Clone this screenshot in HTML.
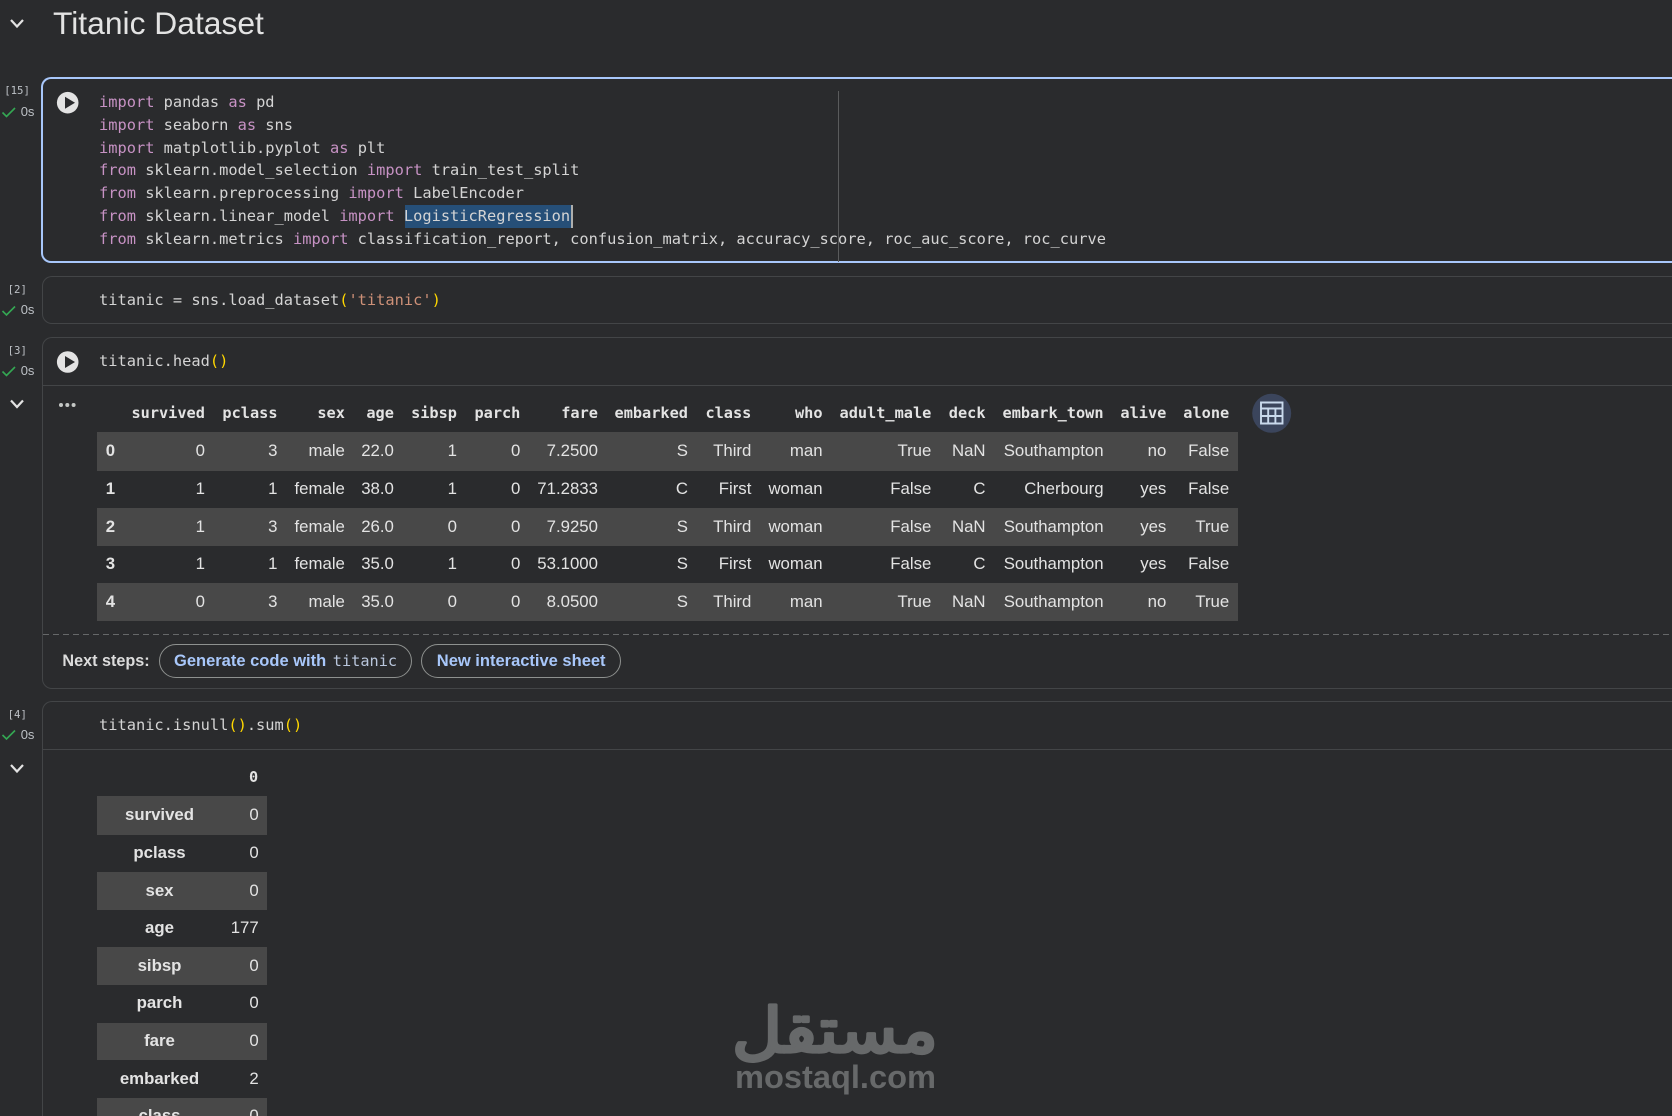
<!DOCTYPE html>
<html lang="en"><head><meta charset="utf-8"><title>Titanic Dataset</title>
<style>
html,body{margin:0;padding:0;background:#2a2b2d;overflow:hidden}
#p{position:relative;width:1672px;height:1116px;overflow:hidden;background:#2a2b2d;color:#e3e3e3;font-family:"Liberation Sans",sans-serif}
#p>*{position:absolute}
.cell{border:1px solid #434547;border-right:0;border-radius:10px 0 0 10px;box-sizing:border-box;left:42px;width:1630px}
.code{left:99px;font:15.35px/23px "DejaVu Sans Mono",monospace;color:#d4d4d4;white-space:pre;height:23px}
.k{color:#c792c4}.s{color:#ce9178}.b{color:#ffd700}
.n{font:10.7px/14px "DejaVu Sans Mono",monospace;color:#bdc1c6;white-space:pre}
.t{font-size:13px;line-height:16px;color:#bdc1c6;left:20.7px}
.hl{background:#434547;height:1px;left:42px;width:1630px}
.r{left:97px;width:1141px;display:flex;font-size:16.8px}
.r span{display:block;flex:none;box-sizing:border-box;text-align:right;padding-right:8.7px;white-space:nowrap}
.r span:nth-child(1){width:26px;text-align:left;padding:0 0 0 8.7px;font-weight:700}
.r span:nth-child(2){width:90.6px}.r span:nth-child(3){width:72.6px}.r span:nth-child(4){width:67.4px}
.r span:nth-child(5){width:49px}.r span:nth-child(6){width:63.1px}.r span:nth-child(7){width:63.4px}
.r span:nth-child(8){width:77.6px}.r span:nth-child(9){width:90px}.r span:nth-child(10){width:63.4px}
.r span:nth-child(11){width:71.2px}.r span:nth-child(12){width:108.8px}.r span:nth-child(13){width:54.2px}
.r span:nth-child(14){width:118px}.r span:nth-child(15){width:62.8px}.r span:nth-child(16){width:62.9px}
.h{font:700 15.25px/38px "DejaVu Sans Mono",monospace;top:394px;height:38px}
.z{background:#484848}
.w{left:97px;width:170px;font-size:16.8px;display:flex;overflow:hidden}
.w b{display:block;width:125px;text-align:center}
.w i{display:block;width:36.7px;text-align:right;font-style:normal}
.chip{border:1px solid #8e918f;border-radius:17px;box-sizing:border-box;height:34px;top:644px;font-weight:700;font-size:16.5px;line-height:33px;color:#a8c7fa;white-space:nowrap}
</style></head><body><div id="p">

<svg style="left:0;top:0" width="80" height="1116" fill="none">
<path d="M11 20L17 26.5L23 20" stroke="#e3e3e3" stroke-width="2.2"/>
<path d="M11 400.5L17 407L23 400.5" stroke="#e3e3e3" stroke-width="2.2"/>
<path d="M11 765L17 771.5L23 765" stroke="#e3e3e3" stroke-width="2.2"/>
<g stroke="#34a853" stroke-width="1.6">
<path d="M2.5 112.5L6.5 116.5L15 108"/>
<path d="M2.5 311L6.5 315L15 306.5"/>
<path d="M2.5 371.5L6.5 375.5L15 367"/>
<path d="M2.5 735L6.5 739L15 730.5"/>
</g>
<g fill="#c4c7c5"><circle cx="61" cy="405" r="2"/><circle cx="67.3" cy="405" r="2"/><circle cx="73.6" cy="405" r="2"/></g>
</svg>

<div style="left:53px;top:3px;font-size:31.8px;line-height:40px;color:#e3e3e3;white-space:nowrap">Titanic Dataset</div>

<div class="n" style="left:4.2px;top:84px">[15]</div><div class="t" style="top:104px">0s</div>
<div class="n" style="left:7.6px;top:283px">[2]</div><div class="t" style="top:302px">0s</div>
<div class="n" style="left:7.6px;top:344px">[3]</div><div class="t" style="top:363px">0s</div>
<div class="n" style="left:7.6px;top:708px">[4]</div><div class="t" style="top:727px">0s</div>

<div class="cell" style="top:77px;height:186px;border:2px solid #a8c7fa;border-right:0;left:41px;width:1631px"></div>
<div class="cell" style="top:276px;height:48px"></div>
<div class="cell" style="top:337px;height:352px"></div>
<div class="cell" style="top:701px;height:415px;border-bottom:0;border-radius:10px 0 0 0"></div>
<div class="hl" style="top:385px"></div>
<div class="hl" style="top:749px"></div>
<div style="left:43px;width:1629px;top:634px;height:1px;background:repeating-linear-gradient(90deg,#666869 0 6px,transparent 6px 10px)"></div>

<div style="left:404.5px;top:205px;width:166px;height:23px;background:#264f78"></div>
<div style="left:571px;top:205px;width:1.5px;height:23px;background:#aeafad"></div>
<div style="left:838px;top:91px;width:1px;height:171px;background:#5a5b5c"></div>

<svg style="left:50px;top:85px" width="36" height="300">
<circle cx="17.7" cy="17.7" r="10.8" fill="#e3e3e3"/><path d="M15 11.7V23.7L25 17.7Z" fill="#2a2b2d"/>
<circle cx="17.7" cy="277" r="10.8" fill="#e3e3e3"/><path d="M15 271V283L25 277Z" fill="#2a2b2d"/>
</svg>

<div class="code" style="top:90.5px"><span class="k">import</span> pandas <span class="k">as</span> pd</div>
<div class="code" style="top:114px"><span class="k">import</span> seaborn <span class="k">as</span> sns</div>
<div class="code" style="top:137px"><span class="k">import</span> matplotlib.pyplot <span class="k">as</span> plt</div>
<div class="code" style="top:158.6px"><span class="k">from</span> sklearn.model_selection <span class="k">import</span> train_test_split</div>
<div class="code" style="top:181.5px"><span class="k">from</span> sklearn.preprocessing <span class="k">import</span> LabelEncoder</div>
<div class="code" style="top:205px"><span class="k">from</span> sklearn.linear_model <span class="k">import</span> LogisticRegression</div>
<div class="code" style="top:228px"><span class="k">from</span> sklearn.metrics <span class="k">import</span> classification_report, confusion_matrix, accuracy_score, roc_auc_score, roc_curve</div>
<div class="code" style="top:288.5px">titanic = sns.load_dataset<span class="b">(</span><span class="s">'titanic'</span><span class="b">)</span></div>
<div class="code" style="top:349.5px">titanic.head<span class="b">()</span></div>
<div class="code" style="top:714px">titanic.isnull<span class="b">()</span>.sum<span class="b">()</span></div>

<div class="r h"><span></span><span>survived</span><span>pclass</span><span>sex</span><span>age</span><span>sibsp</span><span>parch</span><span>fare</span><span>embarked</span><span>class</span><span>who</span><span>adult_male</span><span>deck</span><span>embark_town</span><span>alive</span><span>alone</span></div>
<div class="r z" style="top:432px;height:38.7px;line-height:38.7px"><span>0</span><span>0</span><span>3</span><span>male</span><span>22.0</span><span>1</span><span>0</span><span>7.2500</span><span>S</span><span>Third</span><span>man</span><span>True</span><span>NaN</span><span>Southampton</span><span>no</span><span>False</span></div>
<div class="r" style="top:470.7px;height:37.3px;line-height:35.3px"><span>1</span><span>1</span><span>1</span><span>female</span><span>38.0</span><span>1</span><span>0</span><span>71.2833</span><span>C</span><span>First</span><span>woman</span><span>False</span><span>C</span><span>Cherbourg</span><span>yes</span><span>False</span></div>
<div class="r z" style="top:508px;height:37.7px;line-height:38.7px"><span>2</span><span>1</span><span>3</span><span>female</span><span>26.0</span><span>0</span><span>0</span><span>7.9250</span><span>S</span><span>Third</span><span>woman</span><span>False</span><span>NaN</span><span>Southampton</span><span>yes</span><span>True</span></div>
<div class="r" style="top:545.7px;height:37.3px;line-height:35.3px"><span>3</span><span>1</span><span>1</span><span>female</span><span>35.0</span><span>1</span><span>0</span><span>53.1000</span><span>S</span><span>First</span><span>woman</span><span>False</span><span>C</span><span>Southampton</span><span>yes</span><span>False</span></div>
<div class="r z" style="top:583px;height:37.7px;line-height:38.7px"><span>4</span><span>0</span><span>3</span><span>male</span><span>35.0</span><span>0</span><span>0</span><span>8.0500</span><span>S</span><span>Third</span><span>man</span><span>True</span><span>NaN</span><span>Southampton</span><span>no</span><span>True</span></div>

<svg style="left:1249px;top:392px" width="44" height="44" fill="none">
<circle cx="22.7" cy="21.3" r="19.5" fill="#3b455c"/>
<path d="M12 10.5H33.5V31.5H12ZM12 16.5H33.5M12 24H33.5M19.2 16.5V31.5M26.4 16.5V31.5" stroke="#c9d9ec" stroke-width="1.9"/>
</svg>

<div style="left:62.4px;top:650.5px;font-size:16.2px;font-weight:700;line-height:20px;color:#dcdcdc;white-space:nowrap">Next steps:</div>
<div class="chip" style="left:159px;width:252.5px;padding-left:14px">Generate code with <span style="font:15.25px 'DejaVu Sans Mono',monospace;color:#b9c6dc;margin-left:2px">titanic</span></div>
<div class="chip" style="left:421px;width:199.6px;padding-left:14.8px">New interactive sheet</div>

<div style="left:249px;top:767px;font:700 15.25px/20px 'DejaVu Sans Mono',monospace;white-space:nowrap">0</div>
<div class="w z" style="top:796px;height:39px;line-height:37px"><b>survived</b><i>0</i></div>
<div class="w" style="top:835px;height:37px;line-height:35px"><b>pclass</b><i>0</i></div>
<div class="w z" style="top:872px;height:38px;line-height:38px"><b>sex</b><i>0</i></div>
<div class="w" style="top:910px;height:37px;line-height:35px"><b>age</b><i>177</i></div>
<div class="w z" style="top:947px;height:38px;line-height:38px"><b>sibsp</b><i>0</i></div>
<div class="w" style="top:985px;height:38px;line-height:36px"><b>parch</b><i>0</i></div>
<div class="w z" style="top:1023px;height:37px;line-height:35px"><b>fare</b><i>0</i></div>
<div class="w" style="top:1060px;height:38px;line-height:38px"><b>embarked</b><i>2</i></div>
<div class="w z" style="top:1098px;height:18px;line-height:36px"><b>class</b><i>0</i></div>

<svg style="left:700px;top:980px" width="270" height="90">
<text transform="translate(135 72) scale(1.11 1)" x="0" y="0" text-anchor="middle" direction="rtl" font-family="'DejaVu Sans',sans-serif" font-size="62" fill="#67696a" stroke="#67696a" stroke-width="3.2" stroke-linejoin="round" stroke-linecap="round">مستقل</text>
</svg>
<div style="left:734px;top:1060px;width:203px;height:34px;font-size:32.6px;font-weight:700;line-height:34px;color:#67696a;white-space:nowrap;text-align:center">mostaql.com</div>

</div></body></html>
